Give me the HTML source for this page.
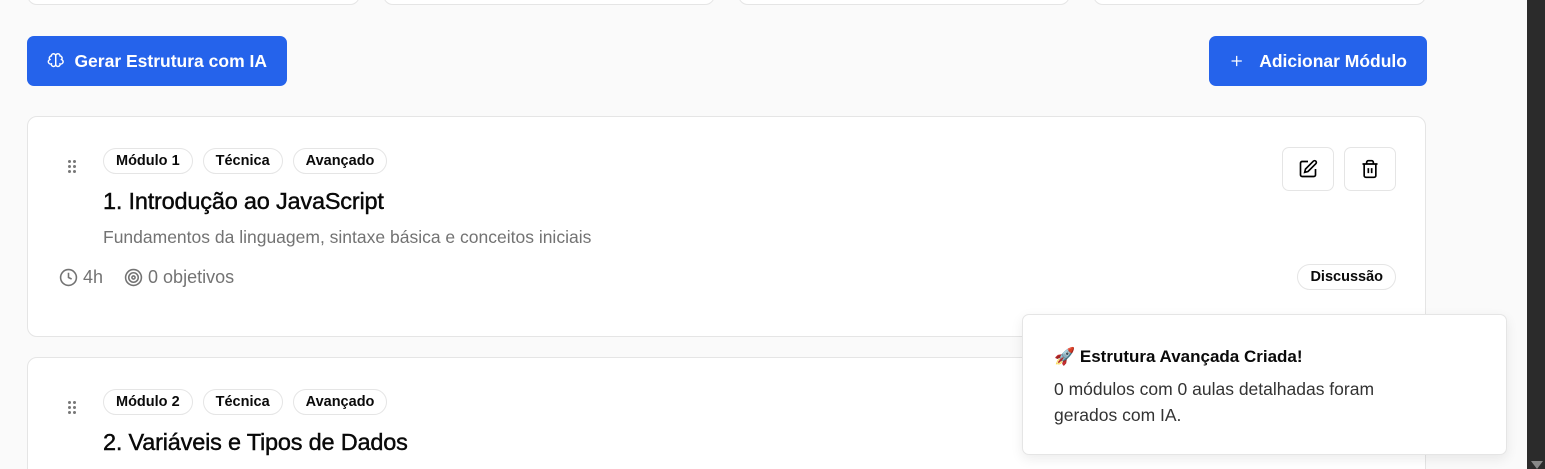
<!DOCTYPE html>
<html><head><meta charset="utf-8"><style>
*{box-sizing:border-box;margin:0;padding:0}
html,body{width:1545px;height:469px;overflow:hidden}
body{background:#fafafa;font-family:"Liberation Sans","Noto Sans CJK JP",sans-serif;position:relative;color:#0a0a0a}
.top{position:absolute;top:-20px;height:25px;background:#fff;border:1px solid #e5e5e5;border-radius:10px}
.btn{position:absolute;top:36px;height:50px;background:#2563eb;color:#fff;border-radius:7px;font-size:17.5px;font-weight:bold;display:flex;align-items:center;gap:10px;padding:0 20px;white-space:nowrap}
.card{position:absolute;left:27px;width:1399px;background:#fff;border:1px solid #e5e5e5;border-radius:10px}
.pill{display:inline-block;border:1px solid #e5e5e5;border-radius:14px;font-size:14.5px;font-weight:bold;padding:4px 12px;margin-right:10px;line-height:16px}
.grip{position:absolute;left:40px;width:10px}
.grip i{position:absolute;width:3px;height:3px;background:#777;border-radius:50%}
h2{font-size:23.5px;font-weight:normal;letter-spacing:-0.2px;-webkit-text-stroke:0.4px #000;white-space:nowrap}
.ib{position:absolute;top:30px;width:52px;height:44px;border:1px solid #e5e5e5;border-radius:7px;display:flex;align-items:center;justify-content:center}
.toast{position:absolute;left:1022px;top:314px;width:485px;height:141px;background:#fff;border:1px solid #e5e5e5;border-radius:7px;box-shadow:0 4px 12px rgba(0,0,0,.08);padding:32px 31px}
</style></head><body>
<div class="top" style="left:27px;width:333px"></div>
<div class="top" style="left:383px;width:332px"></div>
<div class="top" style="left:738px;width:332px"></div>
<div class="top" style="left:1093px;width:333px"></div>

<div class="btn" style="left:27px;width:260px"><svg width="20" height="20" viewBox="0 0 24 24" fill="none" stroke="#fff" stroke-width="2"><path d="M12 5a3 3 0 0 0-6 0 3 3 0 0 0-2 5 3 3 0 0 0 2 6 3 3 0 0 0 6 1V5zM12 5a3 3 0 0 1 6 0 3 3 0 0 1 2 5 3 3 0 0 1-2 6 3 3 0 0 1-6 1"/></svg>Gerar Estrutura com IA</div>
<div class="btn" style="left:1209px;width:218px;padding-left:20px"><svg width="20" height="20" viewBox="0 0 24 24" fill="none" stroke="#fff" stroke-width="2"><path d="M12 4v16M4 12h16"/></svg>&nbsp;Adicionar Módulo</div>

<div class="card" style="top:116px;height:221px">
<div class="grip" style="top:43px"><i style="left:0;top:0"></i><i style="left:5px;top:0"></i><i style="left:0;top:5px"></i><i style="left:5px;top:5px"></i><i style="left:0;top:10px"></i><i style="left:5px;top:10px"></i></div>
<div style="position:absolute;left:75px;top:31px;white-space:nowrap"><span class="pill">Módulo 1</span><span class="pill">Técnica</span><span class="pill">Avançado</span></div>
<h2 style="position:absolute;left:75px;top:71px">1. Introdução ao JavaScript</h2>
<div style="position:absolute;left:75px;top:110px;font-size:17.5px;color:#737373;white-space:nowrap">Fundamentos da linguagem, sintaxe básica e conceitos iniciais</div>
<div style="position:absolute;left:31px;top:150px;font-size:18px;color:#737373;display:flex;align-items:center;gap:5px;white-space:nowrap">
<svg width="19" height="19" viewBox="0 0 24 24" fill="none" stroke="#737373" stroke-width="2"><circle cx="12" cy="12" r="10"/><path d="M12 6v6l4 2"/></svg>4h
<svg style="margin-left:16px" width="19" height="19" viewBox="0 0 24 24" fill="none" stroke="#737373" stroke-width="2"><circle cx="12" cy="12" r="10"/><circle cx="12" cy="12" r="6"/><circle cx="12" cy="12" r="2"/></svg>0 objetivos</div>
<div class="ib" style="left:1254px"><svg width="20" height="20" viewBox="0 0 24 24" fill="none" stroke="#000" stroke-width="2"><path d="M12 3H5a2 2 0 0 0-2 2v14a2 2 0 0 0 2 2h14a2 2 0 0 0 2-2v-7"/><path d="M18.4 2.6a2.1 2.1 0 0 1 3 3L12 15l-4 1 1-4z"/></svg></div>
<div class="ib" style="left:1316px"><svg width="20" height="20" viewBox="0 0 24 24" fill="none" stroke="#000" stroke-width="2"><path d="M3 6h18M19 6v14a2 2 0 0 1-2 2H7a2 2 0 0 1-2-2V6M8 6V4a2 2 0 0 1 2-2h4a2 2 0 0 1 2 2v2M10 11v6M14 11v6"/></svg></div>
<div style="position:absolute;right:29px;top:147px"><span class="pill" style="margin:0">Discussão</span></div>
</div>

<div class="card" style="top:357px;height:130px">
<div class="grip" style="top:43px"><i style="left:0;top:0"></i><i style="left:5px;top:0"></i><i style="left:0;top:5px"></i><i style="left:5px;top:5px"></i><i style="left:0;top:10px"></i><i style="left:5px;top:10px"></i></div>
<div style="position:absolute;left:75px;top:31px;white-space:nowrap"><span class="pill">Módulo 2</span><span class="pill">Técnica</span><span class="pill">Avançado</span></div>
<h2 style="position:absolute;left:75px;top:71px">2. Variáveis e Tipos de Dados</h2>
</div>

<div class="toast"><div style="font-size:17px;font-weight:bold;margin-bottom:9px;white-space:nowrap">🚀 Estrutura Avançada Criada!</div><div style="font-size:17.5px;line-height:26px;color:#333;white-space:nowrap">0 módulos com 0 aulas detalhadas foram<br>gerados com IA.</div></div>

<div style="position:absolute;left:1527px;top:0;width:18px;height:469px;background:#2b2b2b"></div>
<div style="position:absolute;left:1531px;top:461px;width:0;height:0;border-left:6px solid transparent;border-right:6px solid transparent;border-top:8px solid #888"></div>
</body></html>
